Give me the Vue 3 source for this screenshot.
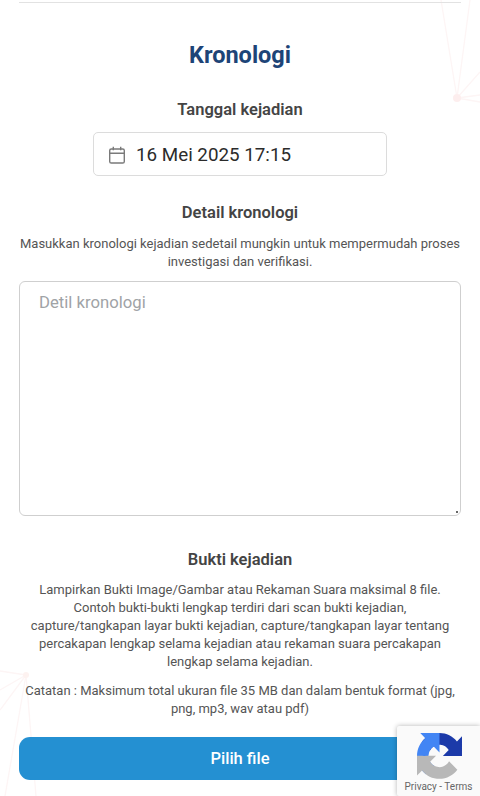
<template>
  <div class="page">
    <!-- garis-garis latar -->
    <svg class="bg-lines" width="480" height="796" viewBox="0 0 480 796" fill="none">
      <g stroke="#fdf5f5" stroke-width="1.3">
        <path d="M441 0 L457 98 L470 0" />
        <path d="M457 98 L480 72" />
        <path d="M457 98 L480 95" />
        <path d="M457 98 L480 102" />
        <path d="M26 675 L0 671" />
        <path d="M26 675 L0 690" />
        <path d="M26 675 L0 710" />
        <path d="M26 675 L5 796" />
        <path d="M26 675 L36 796" />
      </g>
      <circle cx="457" cy="98" r="4" fill="#fdeeee" />
      <circle cx="26" cy="675" r="3" fill="#fdf2f0" />
    </svg>

    <div class="content">
      <hr class="divider" />
      <h1 class="title">Kronologi</h1>

      <h2 class="label">Tanggal kejadian</h2>
      <div class="date-box">
        <svg class="cal-icon" width="18" height="18" viewBox="0 0 18 18" fill="none" stroke="#7a7a7a" stroke-width="1.4">
          <rect x="1.7" y="3" width="14.6" height="14" rx="1.6" />
          <path d="M1.7 7.2 H16.3 M5.3 0.8 V4.2 M12.7 0.8 V4.2" />
        </svg>
        <span>16 Mei 2025 17:15</span>
      </div>

      <h2 class="label label-detail">Detail kronologi</h2>
      <p class="desc">Masukkan kronologi kejadian sedetail mungkin untuk mempermudah proses investigasi dan verifikasi.</p>
      <div class="detail-wrap">
        <textarea class="detail-input" placeholder="Detil kronologi"></textarea>
        <span class="grip"></span>
      </div>

      <h2 class="label label-bukti">Bukti kejadian</h2>
      <p class="desc desc-bukti">Lampirkan Bukti Image/Gambar atau Rekaman Suara maksimal 8 file. Contoh bukti-bukti lengkap terdiri dari scan bukti kejadian, capture/tangkapan layar bukti kejadian, capture/tangkapan layar tentang percakapan lengkap selama kejadian atau rekaman suara percakapan lengkap selama kejadian.</p>
      <p class="desc desc-note">Catatan : Maksimum total ukuran file 35 MB dan dalam bentuk format (jpg, png, mp3, wav atau pdf)</p>

      <button class="file-btn">Pilih file</button>
    </div>

    <!-- badge recaptcha -->
    <div class="recaptcha">
      <svg class="recaptcha-logo" width="45" height="46" viewBox="0 0 64 64" preserveAspectRatio="none">
        <path d="M64 31.955l-.033-1.37V4.687l-7.16 7.16C50.948 4.674 42.033.093 32.05.093c-10.4 0-19.622 4.96-25.458 12.64l11.736 11.86a15.55 15.55 0 0 1 4.754-5.334c2.05-1.6 4.952-2.906 9-2.906.46 0 .838.054 1.103.155 5.017.396 9.366 3.2 11.925 7.273l-8.307 8.307c10.522-.04 22.4-.066 27.2.006" fill="#1c3aa9" />
        <path d="M31.9.002l-1.37.033H4.632l7.16 7.16C4.62 13.053.037 21.968.037 31.95c0 10.4 4.96 19.622 12.64 25.458l11.86-11.736a15.55 15.55 0 0 1-5.334-4.754c-1.6-2.05-2.906-4.952-2.906-9 0-.46.054-.838.155-1.103.396-5.017 3.2-9.366 7.273-11.925l8.307 8.307c-.04-10.522-.066-22.4.006-27.2" fill="#4285f4" />
        <path d="M.002 31.953l.033 1.37v25.898l7.16-7.16c5.86 7.173 14.775 11.756 24.757 11.756 10.4 0 19.622-4.96 25.458-12.64L45.55 39.32a15.55 15.55 0 0 1-4.754 5.334c-2.05 1.6-4.952 2.906-9 2.906-.46 0-.838-.054-1.103-.155-5.017-.396-9.366-3.2-11.925-7.273l8.307-8.307c-10.522.04-22.4.066-27.2-.006" fill="#b8b8b8" />
      </svg>
      <div class="recaptcha-links">Privacy - Terms</div>
    </div>
  </div>
</template>

<script setup>
</script>

<style>
html,
body {
  margin: 0;
  background: #fff;
}
</style>

<style scoped>
.page {
  position: relative;
  width: 480px;
  height: 796px;
  overflow: hidden;
  background: #fff;
  font-family: Roboto, "Liberation Sans", sans-serif;
  color: #555;
}

.bg-lines {
  position: absolute;
  top: 0;
  left: 0;
}

.content {
  position: relative;
  padding: 2px 19px 0;
  display: flex;
  flex-direction: column;
  align-items: center;
}

.divider {
  width: 100%;
  margin: 0;
  border: none;
  border-top: 1px solid #e2e2e2;
}

.title {
  margin: 37px 0 0;
  font-size: 23.5px;
  line-height: 30px;
  font-weight: 700;
  color: #1d4477;
}

.label {
  margin: 28px 0 0;
  font-size: 16.5px;
  line-height: 24px;
  font-weight: 600;
  color: #444;
}

.date-box {
  box-sizing: border-box;
  width: 294px;
  height: 44px;
  margin-top: 10px;
  padding: 1px 14px 0;
  display: flex;
  align-items: center;
  gap: 10px;
  border: 1.5px solid #dcdcdc;
  border-radius: 5px;
  background: #fff;
  font-size: 18.8px;
  color: #2b2b2b;
}

.label-detail {
  margin-top: 25px;
}

.desc {
  margin: 0;
  font-size: 13px;
  line-height: 18px;
  text-align: center;
  color: #555;
}

.label-detail + .desc {
  margin-top: 10px;
}

.detail-wrap {
  position: relative;
  width: 100%;
  margin-top: 10px;
}

.detail-input {
  box-sizing: border-box;
  width: 100%;
  height: 235px;
  padding: 11px 19px;
  border: 1.5px solid #cfcfcf;
  border-radius: 6px;
  background: transparent;
  font-family: inherit;
  font-size: 16.7px;
  color: #333;
  display: block;
  resize: none;
}

.detail-input::placeholder {
  color: #a0a3a6;
}

.grip {
  position: absolute;
  right: 3px;
  bottom: 3px;
  width: 2px;
  height: 2px;
  background: #666;
}

.label-bukti {
  margin-top: 32px;
}

.desc-bukti {
  margin-top: 9px;
}

.desc-note {
  margin-top: 11px;
}

.file-btn {
  width: 100%;
  height: 43px;
  margin-top: 19px;
  border: none;
  border-radius: 11px;
  background: #2490d2;
  color: #fff;
  font-family: inherit;
  font-size: 16.5px;
  font-weight: 500;
}

.recaptcha {
  position: absolute;
  left: 397px;
  top: 726px;
  width: 83px;
  height: 70px;
  background: #fafafa;
  border-radius: 2px 0 0 2px;
  box-shadow: 0 0 5px rgba(0, 0, 0, 0.3);
}

.recaptcha-logo {
  position: absolute;
  left: 20px;
  top: 7px;
}

.recaptcha-links {
  position: absolute;
  left: 0;
  right: 0;
  bottom: 2px;
  text-align: center;
  font-size: 10px;
  line-height: 14px;
  color: #666;
  white-space: nowrap;
}
</style>
